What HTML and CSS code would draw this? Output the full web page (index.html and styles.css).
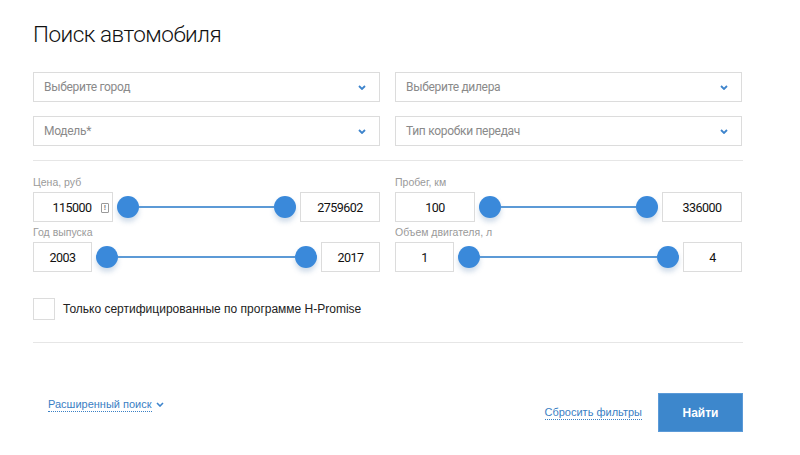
FILE: index.html
```html
<!DOCTYPE html>
<html lang="ru">
<head>
<meta charset="utf-8">
<title>Поиск автомобиля</title>
<link rel="stylesheet" href="styles.css">
</head>
<body>
<div class="page">
  <h1 class="title">Поиск автомобиля</h1>

  <div class="selects">
    <div class="select"><span>Выберите город</span><svg class="chev" width="8" height="5" viewBox="0 0 8 5"><path d="M1 1l3 3 3-3" fill="none" stroke="#3d84cc" stroke-width="1.8"/></svg></div>
    <div class="select"><span>Выберите дилера</span><svg class="chev" width="8" height="5" viewBox="0 0 8 5"><path d="M1 1l3 3 3-3" fill="none" stroke="#3d84cc" stroke-width="1.8"/></svg></div>
    <div class="select"><span>Модель*</span><svg class="chev" width="8" height="5" viewBox="0 0 8 5"><path d="M1 1l3 3 3-3" fill="none" stroke="#3d84cc" stroke-width="1.8"/></svg></div>
    <div class="select"><span>Тип коробки передач</span><svg class="chev" width="8" height="5" viewBox="0 0 8 5"><path d="M1 1l3 3 3-3" fill="none" stroke="#3d84cc" stroke-width="1.8"/></svg></div>
  </div>

  <div class="divider"></div>

  <div class="ranges">
    <div class="range">
      <div class="label">Цена, руб</div>
      <div class="slider">
        <div class="val w80 has-icon">115000<span class="warn">!</span></div>
        <div class="track"><span class="knob"></span><span class="line"></span><span class="knob"></span></div>
        <div class="val w80">2759602</div>
      </div>
    </div>
    <div class="range">
      <div class="label">Пробег, км</div>
      <div class="slider">
        <div class="val w80">100</div>
        <div class="track"><span class="knob"></span><span class="line"></span><span class="knob"></span></div>
        <div class="val w80">336000</div>
      </div>
    </div>
    <div class="range">
      <div class="label">Год выпуска</div>
      <div class="slider">
        <div class="val w58">2003</div>
        <div class="track"><span class="knob"></span><span class="line"></span><span class="knob"></span></div>
        <div class="val w58">2017</div>
      </div>
    </div>
    <div class="range">
      <div class="label">Объем двигателя, л</div>
      <div class="slider">
        <div class="val w58">1</div>
        <div class="track"><span class="knob"></span><span class="line"></span><span class="knob"></span></div>
        <div class="val w58">4</div>
      </div>
    </div>
  </div>

  <label class="check"><span class="box"></span><span class="check-text">Только сертифицированные по программе H-Promise</span></label>

  <div class="divider"></div>

  <div class="footer">
    <a class="link adv" href="#">Расширенный поиск</a><svg class="chev small" width="8" height="5" viewBox="0 0 8 5"><path d="M1 1l3 3 3-3" fill="none" stroke="#3d84cc" stroke-width="1.6"/></svg>
    <div class="spacer"></div>
    <a class="link reset" href="#">Сбросить фильтры</a>
    <button class="btn" type="button">Найти</button>
  </div>
</div>
</body>
</html>
```
FILE: styles.css
```css
* { box-sizing: border-box; }
body {
  margin: 0;
  background: #fff;
  font-family: Roboto, "Liberation Sans", sans-serif;
  color: #222;
}
.page {
  width: 743px;
  padding: 19px 0 0 33px;
}
.title {
  margin: 0;
  font-size: 22.5px;
  line-height: 30px;
  font-weight: 300;
  color: #111;
  letter-spacing: -0.5px;
}
.selects {
  margin-top: 23px;
  display: grid;
  grid-template-columns: 347px 347px;
  column-gap: 15px;
  row-gap: 14px;
}
.select {
  height: 30px;
  border: 1px solid #dcdcdc;
  display: flex;
  align-items: center;
  justify-content: space-between;
  padding: 0 13px 0 10px;
  font-size: 12px;
  letter-spacing: -0.3px;
  color: #8a8a8a;
}
.chev { display: block; }
.divider {
  height: 1px;
  background: #e6e6e6;
  margin-top: 14px;
  width: 710px;
}
.ranges {
  margin-top: 11px;
  display: grid;
  grid-template-columns: 347px 347px;
  column-gap: 15px;
}
.label {
  height: 20px;
  padding-top: 2px;
  font-family: "Liberation Sans", Arial, sans-serif;
  font-size: 10.5px;
  line-height: 16px;
  color: #9a9a9a;
}
.slider {
  display: flex;
  align-items: center;
  height: 30px;
}
.val {
  height: 30px;
  border: 1px solid #dcdcdc;
  display: flex;
  align-items: center;
  justify-content: center;
  font-size: 12.5px;
  letter-spacing: -0.5px;
  color: #111;
  position: relative;
  flex: none;
}
.w80 { width: 80px; }
.w58 { width: 59px; }
.has-icon { padding-right: 2px; }
.warn {
  position: absolute;
  right: 3px;
  top: 10px;
  width: 8px;
  height: 10px;
  border: 1px solid #9a9a9a;
  border-radius: 1px;
  font-family: "Liberation Sans", Arial, sans-serif;
  font-size: 7px;
  line-height: 8px;
  letter-spacing: 0;
  text-align: center;
  color: #777;
  font-weight: 700;
}
.track {
  flex: 1;
  display: flex;
  align-items: center;
  padding: 0 4px;
  height: 30px;
}
.knob {
  width: 22px;
  height: 22px;
  border-radius: 50%;
  background: #3a89da;
  box-shadow: 0 4px 5px rgba(70, 120, 170, 0.25);
  flex: none;
}
.line {
  flex: 1;
  height: 2px;
  background: #5c9ad6;
}
.check {
  margin-top: 26px;
  display: flex;
  align-items: center;
  height: 22px;
}
.box {
  width: 22px;
  height: 22px;
  border: 1px solid #dcdcdc;
  flex: none;
}
.check-text {
  margin-left: 8px;
  font-family: "Liberation Sans", Arial, sans-serif;
  font-size: 12px;
  color: #222;
}
.check + .divider { margin-top: 22px; }
.footer {
  margin-top: 50px;
  display: flex;
  align-items: flex-start;
  width: 710px;
}
.link {
  font-family: "Liberation Sans", Arial, sans-serif;
  font-size: 11px;
  line-height: 14px;
  color: #3a80c4;
  text-decoration: none;
  border-bottom: 1px dotted #3a80c4;
}
.adv { margin-left: 15px; margin-top: 4px; }
.chev.small { margin: 9px 0 0 4px; }
.spacer { flex: 1; }
.reset { margin-top: 12px; margin-right: 16px; }
.btn {
  width: 85px;
  height: 39px;
  border: 1px solid #5b9ad8;
  background: #3d87cc;
  color: #fff;
  font-family: "Liberation Sans", Arial, sans-serif;
  font-size: 12px;
  font-weight: 700;
  padding: 0;
}
```
